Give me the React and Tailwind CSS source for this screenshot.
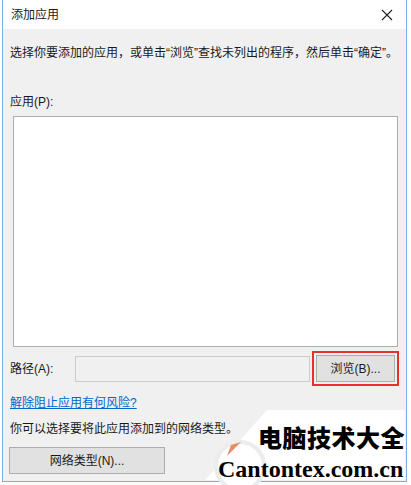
export default function App() {
  const font = { fontFamily: '"Liberation Sans", "Noto Sans CJK SC", sans-serif' };
  return (
    <div className="relative w-[411px] h-[485px] bg-white overflow-hidden text-[12px] text-[#1a1a1a]" style={font}>
      <div className="ml-[2px] w-[405px] h-[482px] border-x border-b border-[#7eaee4] flex flex-col">
        <div className="h-[29px] shrink-0 bg-white flex items-center justify-between pl-[8px] pr-[10px]">
          <span className="leading-[16px]">添加应用</span>
          <svg width="12" height="12" viewBox="0 0 12 12" className="mr-[3px]">
            <path d="M1 1 L11 11 M11 1 L1 11" stroke="#222" strokeWidth="1.1" />
          </svg>
        </div>
        <div className="flex-1 bg-[#f0f0f0] flex flex-col px-[7px]">
          <div className="mt-[16px] leading-[16px] whitespace-nowrap">选择你要添加的应用，或单击“浏览”查找未列出的程序，然后单击“确定”。</div>
          <div className="mt-[33px] leading-[16px]">应用(P):</div>
          <div className="mt-[6px] ml-[3px] w-[385px] h-[231px] bg-white border border-[#adadad]"></div>
          <div className="mt-[4px] flex items-center">
            <span className="w-[65px] leading-[16px]">路径(A):</span>
            <div className="w-[237px] h-[26px] border border-[#cccccc] bg-[#f0f0f0]"></div>
            <div className="ml-[2px] border-2 border-[#e5322d] p-[2px]">
              <div className="w-[79px] h-[27px] bg-[#e1e1e1] border border-[#adadad] flex items-center justify-center leading-[16px]">浏览(B)...</div>
            </div>
          </div>
          <div className="mt-[9px] leading-[16px] text-[#0066cc] underline">解除阻止应用有何风险?</div>
          <div className="mt-[10px] leading-[16px]">你可以选择要将此应用添加到的网络类型。</div>
          <div className="mt-[10px] -ml-[1px] w-[156px] h-[27px] bg-[#e1e1e1] border border-[#adadad] flex items-center justify-center leading-[16px]">网络类型(N)...</div>
        </div>
      </div>
      <div className="absolute left-[205px] top-[410px] w-[200px] h-[70px] bg-white [clip-path:polygon(31%_0,100%_0,100%_100%,0_100%)]"></div>
      <div className="absolute left-[214px] top-[440px] w-[52px] h-[52px] rounded-full border-[4px] border-[#ececec] bg-white"></div>
      <svg className="absolute left-[226px] top-[442px]" width="16" height="14" viewBox="0 0 16 14">
        <path d="M1 14 L5 3 L15 0 Z" fill="#e98a66" />
      </svg>
      <div className="absolute left-[258px] top-[422px] text-[24px] leading-[30px] font-black text-black tracking-[0.5px]" style={{ fontFamily: '"Noto Sans CJK SC", serif' }}>电脑技术大全</div>
      <div className="absolute left-[218px] top-[455px] text-[24px] leading-[28px] font-bold text-black" style={{ fontFamily: '"Liberation Serif", serif' }}>Cantontex.com.cn</div>
    </div>
  );
}
